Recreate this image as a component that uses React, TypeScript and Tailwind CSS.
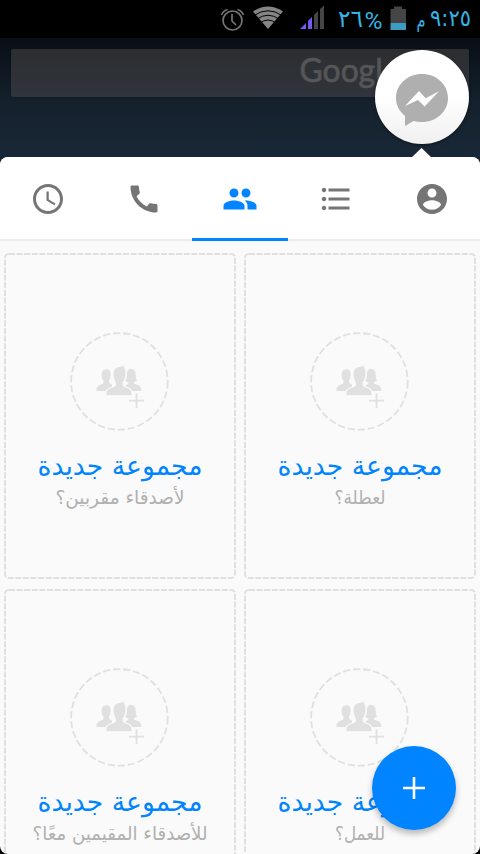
import React from "react";

const font = "font-['DejaVu_Sans','Noto_Sans',sans-serif]";

function Label({ text, width, size, color, y }: { text: string; width: number; size: number; color: string; y: number }) {
  return (
    <svg className="block w-full overflow-visible" height="34" viewBox="0 0 232 34" direction="rtl">
      <text x="116" y={y} textAnchor="middle" fontSize={size} fill={color} textLength={width} lengthAdjust="spacingAndGlyphs">
        {text}
      </text>
    </svg>
  );
}

function GroupArt() {
  return (
    <svg className="block" width="100" height="100" viewBox="0 0 100 100">
      <circle cx="49.400" cy="49.400" r="48.300" fill="none" stroke="#e0e0e0" strokeWidth="1.800" strokeDasharray="7.200 2.840" />
      <g fill="#e0e0e0">
        <path d="M26.500 59C26.500 54.500 28 53.500 32 52.200C34 51.400 34 50 33 48C31.500 46 31.500 44 31.700 41.500C32 38.500 34 37.300 36.300 37.300C39 37.300 40.700 39 40.700 42C40.700 45 40 47 39.200 48C38.500 50 39.500 51.500 42 52.500V59Z" />
        <path d="M71.200 59C71.200 54.500 70 53.500 65.500 52.200C64 51.700 63.500 50.700 64 50C65.500 50 66.700 49.500 67.200 48.800C65.500 47 66 44 65.500 41C65 38 63.500 36.800 61.300 36.800C58.500 36.800 57.200 38.500 57 41C56.700 44 57 47 55.300 48.800C56 49.700 57.500 50 58.500 50C59 51.500 58 52 56 53V59Z" />
        <path stroke="#fafafa" strokeWidth="1.200" d="M35.600 63.800C35.600 58 37 56.800 42.500 55C45.500 54 46 53 45 50C43.300 48 42.800 44 43 41C43.200 36.500 46 34.500 50 34.300C51.500 33.500 53 33.400 54.500 33.600V35.500C56 37.500 56.300 41 55.800 43.500C55.500 47 55 48.500 53.500 50C52.500 53 53.500 54.200 56 55C61 56.800 62.200 58 62.200 63.800Z" />
      </g>
      <path d="M66.500 61.500V76M59 68.700H74" stroke="#e0e0e0" strokeWidth="1.800" />
    </svg>
  );
}

function Card({ sub, width }: { sub: string; width: number }) {
  return (
    <section className="relative flex h-[326px] w-[232px] flex-col items-center pt-[79px]">
      <svg className="absolute inset-0" width="232" height="326">
        <rect x="1" y="1" width="230" height="324" rx="4" fill="none" stroke="#e0e0e0" strokeWidth="2" strokeDasharray="6 1.600" />
      </svg>
      <GroupArt />
      <div className="mt-[11px] w-full">
        <Label text="مجموعة جديدة" width={165} size={27} color="#0084ff" y={32} />
      </div>
      <div className="-mt-[5px] w-full">
        <Label text={sub} width={width} size={19} color="#b0b0b0" y={31.5} />
      </div>
    </section>
  );
}

function Tab({ d, active = false }: { d: string; active?: boolean }) {
  return (
    <div className={active ? "flex h-[84px] items-center justify-center border-b-[3px] border-[#0084ff] pt-[3px] text-[#0084ff]" : "flex h-[84px] items-center justify-center border-b-2 border-[#ececec] pt-[2px] text-[#757575]"}>
      <svg width="36" height="36" viewBox="0 0 24 24" fill="currentColor"><path d={d} /></svg>
    </div>
  );
}

export default function App() {
  return (
    <main dir="ltr" className={`relative h-[854px] w-[480px] overflow-hidden bg-black ${font}`}>
      <header className="flex h-[38px] bg-black">
        <svg className="overflow-visible" width="480" height="38">
          <g fill="none" stroke="#757575" strokeWidth="1.700">
            <circle cx="232.500" cy="20.500" r="9.500" />
            <path d="M232 14V21L236 25M221.500 15Q223 11 227.500 9.500M237.500 9.500Q242 11 243.500 15" />
          </g>
          <path d="M253 11.500Q268 1.500 283 11.500L268 29Z" fill="#858585" />
          <path d="M254 15.500Q268 6 282 15.500M257 19Q268 11.500 279 19M260 23Q268 17 276 23" fill="none" stroke="#000" strokeWidth="1" />
          <path d="M300 29L306 23V29ZM308 21L312 17V29H308Z" fill="#7558f5" />
          <path d="M314 15L318 11V29H314ZM320 9L324 5.500V29H320Z" fill="#454545" />
          <path d="M390.500 9H394V6.500H402V9H406V23H390.500Z" fill="#454545" />
          <path d="M390.500 23H406V30H390.500Z" fill="#3c9cc1" />
          <g fill="#33b5e5" fontSize="23">
            <text x="338" y="26.500" textLength="25" lengthAdjust="spacingAndGlyphs" fontSize="24">٢٦</text>
            <text x="364.500" y="28.500" textLength="18" lengthAdjust="spacingAndGlyphs" fontSize="24" fontFamily="Roboto">%</text>
            <text x="416.500" y="27" textLength="9" lengthAdjust="spacingAndGlyphs" fontSize="20">م</text>
            <text x="430" y="26" textLength="41" lengthAdjust="spacingAndGlyphs">٩:٢٥</text>
          </g>
        </svg>
      </header>
      <div className="relative h-[119px] bg-linear-to-b from-[#090e15] via-[#14202b] to-[#192838] px-[11px] pt-[11px]">
        <div className="h-[48px] rounded-xs bg-linear-to-b from-[#2c2e30] to-[#30343c] pl-[288px] shadow">
          <svg className="block overflow-visible" width="110" height="48">
            <text x="0.500" y="32.500" fontSize="33" fontFamily="Lato" fontWeight="400" fill="#555657" stroke="#555657" strokeWidth="0.700" textLength="100" lengthAdjust="spacingAndGlyphs">Google</text>
          </svg>
        </div>
        <div className="absolute left-[375px] top-[12px] flex h-[94px] w-[94px] items-center justify-center rounded-full bg-linear-to-b from-white from-50% to-[#f0f0f0] shadow-[0_1px_3px_#0008]">
          <svg width="94" height="94">
            <path fill="#afafaf" d="M47 24C61.500 24 73 34.500 73 48S61.500 72 47 72Q42 72 38.500 71L30 76V66C24 61 21 55 21 48C21 34.500 32.500 24 47 24Z" />
            <path fill="#fff" d="M30 56L44 41L50.700 48.300L64 41.300L49.600 56.500L43 50Z" />
          </svg>
        </div>
        <svg className="absolute bottom-0 left-[412px]" width="19" height="9"><path d="M0 9L9.500 0L19 9Z" fill="white" /></svg>
      </div>
      <div className="-mt-px h-[698px] bg-[#192838] pt-px">
        <div className="h-[697px] overflow-hidden rounded-t-lg bg-black">
          <div className="h-[697px] overflow-hidden rounded-b-lg bg-[#fafafa]">
            <nav className="grid grid-cols-5 bg-white">
              <Tab d="M11.990 2C6.470 2 2 6.480 2 12s4.470 10 9.990 10C17.520 22 22 17.520 22 12S17.520 2 11.990 2zM12 20c-4.420 0-8-3.580-8-8s3.580-8 8-8 8 3.580 8 8-3.580 8-8 8zm.500-13H11v6l5.250 3.150.750-1.230-4.500-2.670z" />
              <Tab d="M20.010 15.380c-1.230 0-2.420-.200-3.530-.560-.350-.120-.740-.030-1.010.240l-1.570 1.970c-2.830-1.350-5.480-3.900-6.890-6.830l1.950-1.660c.270-.280.350-.670.240-1.020-.370-1.110-.560-2.300-.560-3.530 0-.540-.450-.990-.990-.990H4.190C3.650 3 3 3.240 3 3.990 3 13.280 10.730 21 20.010 21c.710 0 .990-.630.990-1.180v-3.450c0-.540-.450-.990-.990-.990z" />
              <Tab active d="M16 11c1.660 0 2.990-1.340 2.990-3S17.660 5 16 5c-1.660 0-3 1.340-3 3s1.340 3 3 3zm-8 0c1.660 0 2.990-1.340 2.990-3S9.660 5 8 5C6.340 5 5 6.340 5 8s1.340 3 3 3zm0 2c-2.330 0-7 1.170-7 3.500V19h14v-2.500c0-2.330-4.670-3.500-7-3.500zm8 0c-.290 0-.620.020-.970.050 1.160.840 1.970 1.970 1.970 3.450V19h6v-2.500c0-2.330-4.670-3.500-7-3.500z" />
              <Tab d="M4 10.500c-.830 0-1.500.670-1.500 1.500s.670 1.500 1.500 1.500 1.500-.670 1.500-1.500-.670-1.500-1.500-1.500zm0-6c-.830 0-1.500.670-1.500 1.500S3.170 7.500 4 7.500 5.500 6.830 5.500 6 4.830 4.500 4 4.500zm0 12c-.830 0-1.500.680-1.500 1.500s.680 1.500 1.500 1.500 1.500-.680 1.500-1.500-.670-1.500-1.500-1.500zM7 19h14v-2H7v2zm0-6h14v-2H7v2zm0-8v2h14V5H7z" />
              <Tab d="M12 2C6.480 2 2 6.480 2 12s4.480 10 10 10 10-4.480 10-10S17.520 2 12 2zm0 3c1.660 0 3 1.340 3 3s-1.340 3-3 3-3-1.340-3-3 1.340-3 3-3zm0 14.200c-2.500 0-4.710-1.280-6-3.220.030-1.990 4-3.080 6-3.080 1.990 0 5.970 1.090 6 3.080-1.290 1.940-3.500 3.220-6 3.220z" />
            </nav>
            <div dir="ltr" className="grid grid-cols-2 gap-x-2 gap-y-[10px] px-1 pt-3">
              <Card sub="لأصدقاء مقربين؟" width={129} />
              <Card sub="لعطلة؟" width={51} />
              <Card sub="للأصدقاء المقيمين معًا؟" width={175} />
              <Card sub="للعمل؟" width={50} />
            </div>
          </div>
        </div>
      </div>
      <button aria-label="مجموعة جديدة" className="absolute left-[372px] top-[746px] flex h-[84px] w-[84px] items-center justify-center rounded-full bg-[#0084ff] shadow-[0_4px_6px_#0004]">
        <svg width="22" height="22"><path d="M11 0V22M0 11H22" stroke="white" strokeWidth="2.600" /></svg>
      </button>
    </main>
  );
}
